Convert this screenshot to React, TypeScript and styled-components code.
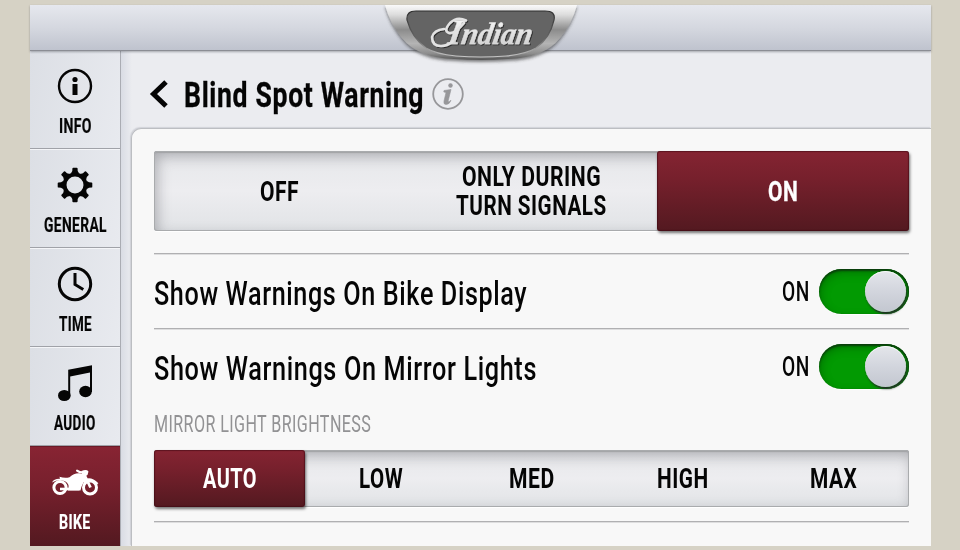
import React, { useLayoutEffect, useRef, useState } from "react";
import styled, { createGlobalStyle, css } from "styled-components";

const GlobalStyle = createGlobalStyle`
  *, *::before, *::after { box-sizing: border-box; }
  html, body { margin: 0; padding: 0; background: #d6d2c5; }
  body { font-family: Roboto, "Liberation Sans", sans-serif; color: #050505; overflow: hidden; }
  button { font: inherit; color: inherit; border: 0; padding: 0; background: none; }
`;

const Page = styled.div`
  width: 960px;
  height: 550px;
  padding: 5px 29px 4px 30px;
  background: #d6d2c5;
`;

const Screen = styled.div`
  position: relative;
  display: flex;
  flex-direction: column;
  height: 541px;
  background: linear-gradient(#ebecf0, #e3e6ec);
`;

const TopBar = styled.header`
  height: 46px;
  flex: none;
  background: linear-gradient(#e6e8ee, #d3d6de 55%, #bfc3ce);
  border-bottom: 1px solid #8b8d94;
  box-shadow: 0 1px 2px rgba(60, 62, 70, 0.4);
  z-index: 1;
`;

const Badge = styled.svg`
  position: absolute;
  left: 350px;
  top: 0;
  z-index: 2;
`;

const Body = styled.div`
  display: flex;
  flex: 1;
  min-height: 0;
`;

const Sidebar = styled.nav`
  width: 90px;
  flex: none;
  display: flex;
  flex-direction: column;
`;

const NavItem = styled.button<{ $active?: boolean }>`
  height: 99px;
  flex: none;
  display: flex;
  flex-direction: column;
  align-items: center;
  padding-top: 18px;
  gap: 11px;
  border-bottom: 1px solid #a0a2a8;
  background: linear-gradient(100deg, #dcdfe5, #e8eaef);
  box-shadow: inset 0 1px 0 #f4f5f8;
  &:first-child { height: 98px; padding-top: 17px; box-shadow: none; }
  ${(p) => p.$active && css`
    height: 100px;
    color: #fff;
    border-bottom: 0;
    box-shadow: inset 0 1px 0 #6b1a27;
    background: linear-gradient(#882433, #77202d 40%, #531920);
  `}
`;

const Main = styled.main`
  flex: 1;
  min-width: 0;
  display: flex;
  flex-direction: column;
  padding-left: 10px;
  border-left: 1px solid #aaacb3;
  background: linear-gradient(90deg, #d9dce4, #ebecf0 11px);
`;

const TitleBar = styled.div`
  height: 77px;
  flex: none;
  display: flex;
  align-items: center;
  padding: 9px 0 0 18px;
`;

const TitleText = styled.div`
  padding-top: 3px;
`;

const Panel = styled.section`
  flex: 1;
  display: flex;
  flex-direction: column;
  padding: 22px 22px 0 22px;
  background: #f8f8f8;
  border: solid #bcbec2;
  border-width: 1px 0 0 1px;
  border-top-left-radius: 10px;
  box-shadow: -1px -1px 1px rgba(150, 153, 162, 0.3);
`;

const Segments = styled.div<{ $height: number }>`
  height: ${(p) => p.$height}px;
  flex: none;
  display: flex;
  border-radius: 3px;
  background: linear-gradient(#e6e7ea, #ededf0 50%, #e1e3e6);
  box-shadow: inset 0 0 0 1px #a9abad, inset 0 2px 1px #a2a3a6, inset 3px 5px 14px rgba(70, 72, 78, 0.38), 0 1px 0 #fff;
`;

const Segment = styled.button<{ $active?: boolean }>`
  flex: 1;
  display: flex;
  flex-direction: column;
  align-items: center;
  justify-content: center;
  ${(p) => p.$active && css`
    color: #fff;
    border-radius: 3px;
    background: linear-gradient(#852432, #76202c 35%, #531920);
    box-shadow: inset 0 0 1px 1px rgba(60, 8, 16, 0.55), 1px 2px 3px rgba(0, 0, 0, 0.55);
  `}
`;

const Divider = styled.hr`
  width: 755px;
  height: 2px;
  margin: 0;
  border: 0;
  flex: none;
  background: linear-gradient(#b0b0b2 50%, #dededf 50%);
`;

const SettingRow = styled.div`
  height: 73px;
  width: 755px;
  flex: none;
  display: flex;
  align-items: center;
  justify-content: space-between;
`;

const RowText = styled.div`
  padding-top: 2px;
`;

const SwitchGroup = styled.div`
  display: flex;
  align-items: center;
  gap: 9px;
`;

const Toggle = styled.button`
  width: 90px;
  height: 45px;
  border-radius: 23px;
  display: flex;
  justify-content: flex-end;
  padding: 2px 3px;
  background: #029a02;
  box-shadow: inset 0 2px 2px #0a3d0c, inset 2px 4px 8px rgba(0, 60, 0, 0.35), inset -1px 0 1px #0b5a0d, 0 1px 0 #fff;
`;

const Knob = styled.span`
  width: 41px;
  height: 41px;
  border-radius: 50%;
  background: linear-gradient(#e4e6eb, #d2d5dd 50%, #c3c7d0);
  box-shadow: inset 0 1px 0 #f5f6f8, 1px 2px 2px #203024;
`;

const SectionLabel = styled.div`
  height: 47px;
  flex: none;
  color: #929294;
  padding-top: 8px;
`;

const Spacer = styled.div<{ $height: number }>`
  height: ${(p) => p.$height}px;
  flex: none;
`;

const FitBox = styled.span<{ $width: number; $size: number; $line: number; $weight: number; $stroke: number }>`
  display: block;
  flex: none;
  width: ${(p) => p.$width}px;
  height: ${(p) => p.$line}px;
  font-size: ${(p) => p.$size}px;
  line-height: ${(p) => p.$line}px;
  font-weight: ${(p) => p.$weight};
  -webkit-text-stroke: ${(p) => p.$stroke}px currentColor;
  text-align: left;
  white-space: nowrap;
`;

const FitInner = styled.span`
  display: inline-block;
  letter-spacing: 0.025em;
  margin-right: -0.025em;
  transform-origin: 0 50%;
`;

type FitProps = { width: number; size: number; line: number; weight?: number; stroke?: number; children: string };

/* Condenses a single line of text horizontally to a given width. */
function Fit({ width, size, line, weight = 700, stroke = 0, children }: FitProps) {
  const ref = useRef<HTMLSpanElement>(null);
  const [scale, setScale] = useState(1);
  useLayoutEffect(() => {
    if (ref.current) setScale(width / ref.current.offsetWidth);
  }, [width, size, weight, children]);
  return (
    <FitBox $width={width} $size={size} $line={line} $weight={weight} $stroke={stroke}>
      <FitInner ref={ref} style={{ transform: `scaleX(${scale})` }}>{children}</FitInner>
    </FitBox>
  );
}

const Icon = styled.svg`
  display: block;
  flex: none;
`;

const BackIcon = styled(Icon)`
  margin-right: 15px;
`;

const HelpIcon = styled(Icon)`
  margin-left: 8px;
`;

const InfoIcon = () => (
  <Icon width="36" height="36" viewBox="0 0 36 36">
    <circle cx="18" cy="18" r="16" fill="none" stroke="currentColor" strokeWidth="2.4" />
    <circle cx="18" cy="11.5" r="2.6" fill="currentColor" />
    <path d="M15.5 16h5v11h-5z" fill="currentColor" />
  </Icon>
);

const GearIcon = () => (
  <Icon width="36" height="36" viewBox="-18 -18 36 36">
    <circle r="10.5" fill="none" stroke="currentColor" strokeWidth="4" />
    {[0, 45, 90, 135, 180, 225, 270, 315].map((a) => (
      <path key={a} transform={`rotate(${a})`} d="M-4.200-11.500L-2.700-14L-2.600-16.500Q-2.500-17.300-1.700-17.300H1.700Q2.500-17.300 2.600-16.500L2.700-14L4.200-11.500z" fill="currentColor" />
    ))}
  </Icon>
);

const ClockIcon = () => (
  <Icon width="36" height="36" viewBox="0 0 36 36">
    <circle cx="18" cy="18" r="15.7" fill="none" stroke="currentColor" strokeWidth="3" />
    <path d="M18 7v11.500l8.300 5" fill="none" stroke="currentColor" strokeWidth="3" />
  </Icon>
);

const NoteIcon = () => (
  <Icon width="36" height="36" viewBox="0 1 36 36">
    <path d="M11.200 5.700L35 1.200V28H33V8.500L13.200 12.500V33h-2z" fill="currentColor" />
    <ellipse cx="7.300" cy="31.500" rx="6.300" ry="5.500" fill="currentColor" />
    <ellipse cx="28.500" cy="27.500" rx="6.300" ry="5.700" fill="currentColor" />
  </Icon>
);

const BikeIcon = () => (
  <Icon width="48" height="36" viewBox="0 0 48 36">
    <g fill="none" stroke="currentColor">
      <circle cx="9" cy="23.500" r="6.100" strokeWidth="3" />
      <circle cx="39" cy="23.500" r="6.500" strokeWidth="3" />
      <path d="M32.500 9L39.500 23.500" strokeWidth="2.800" />
      <path d="M26 6.600Q29 9 34 8.500" strokeWidth="2" strokeLinecap="round" />
      <path d="M32.500 17.500Q39 12.500 46.500 20" strokeWidth="2.400" />
      <path d="M9 25H28" strokeWidth="2.600" />
    </g>
    <path d="M1 18.500Q3 14.500 9 14.800L8.500 12.800Q14 14.500 18.500 13.200Q23 9 28 9.200L31 9.800L30.500 7Q35.500 5 37.500 7.500L36.500 11L34 12.500L35 16Q31 19 29.500 26.500H17Q19 19.500 14 17.300Q8 14.500 1 18.500z" fill="currentColor" />
  </Icon>
);

const nav = [
  { label: "INFO", width: 33, icon: <InfoIcon /> },
  { label: "GENERAL", width: 63, icon: <GearIcon /> },
  { label: "TIME", width: 33, icon: <ClockIcon /> },
  { label: "AUDIO", width: 42, icon: <NoteIcon /> },
  { label: "BIKE", width: 32, icon: <BikeIcon />, active: true },
];

const levels = [
  { label: "AUTO", width: 54, active: true },
  { label: "LOW", width: 44 },
  { label: "MED", width: 46 },
  { label: "HIGH", width: 52 },
  { label: "MAX", width: 47 },
];

const settings = [
  { label: "Show Warnings On Bike Display", width: 373 },
  { label: "Show Warnings On Mirror Lights", width: 383 },
];

const Logo = () => (
  <Badge width="202" height="62" viewBox="380 5 202 62">
    <defs>
      <linearGradient id="chrome" x1="0" y1="0" x2="0" y2="1">
        <stop offset="0" stopColor="#fafafa" />
        <stop offset=".18" stopColor="#dcdcdc" />
        <stop offset=".45" stopColor="#8c8c8c" />
        <stop offset=".7" stopColor="#b4b4b4" />
        <stop offset=".88" stopColor="#8e8e8e" />
        <stop offset="1" stopColor="#545454" />
      </linearGradient>
      <linearGradient id="rim" x1="0" y1="0" x2="0" y2="1">
        <stop offset="0" stopColor="#2e2e2e" />
        <stop offset=".6" stopColor="#666" />
        <stop offset="1" stopColor="#c8c8c8" />
      </linearGradient>
      <linearGradient id="script" x1="0" y1="0" x2="0" y2="1">
        <stop offset="0" stopColor="#fff" />
        <stop offset="1" stopColor="#c8c8c8" />
      </linearGradient>
      <filter id="drop" x="-10%" y="-10%" width="120%" height="130%">
        <feDropShadow dx="0" dy="2" stdDeviation="1.500" floodColor="#333" floodOpacity=".6" />
      </filter>
      <filter id="engrave" x="-10%" y="-10%" width="120%" height="130%">
        <feDropShadow dx="1" dy="1" stdDeviation=".5" floodColor="#222" floodOpacity=".8" />
      </filter>
    </defs>
    <path d="M385 5H577Q572 24 560 38Q544 58 508 59Q481 61 454 59Q418 58 402 38Q390 24 385 5z" fill="url(#chrome)" filter="url(#drop)" />
    <path d="M416 11H545Q556 11 554 20Q550 38 536 48Q526 54 506 56Q481 58 456 56Q436 54 426 48Q412 38 407 20Q406 11 416 11z" fill="#646464" stroke="url(#rim)" strokeWidth="1.200" />
    <g filter="url(#engrave)">
      <g transform="translate(0 44) skewX(-10)">
        <text x="447" y="0" textLength="84" lengthAdjust="spacingAndGlyphs" fontFamily="'Liberation Serif', serif" fontSize="31" fontStyle="italic" fontWeight="700" fill="url(#script)" stroke="#e0e0e0" strokeWidth=".4">
          <tspan fontSize="36">I</tspan>ndian
        </text>
      </g>
      <path d="M466 20.500Q457 16 450 23Q443 31 449 33Q455 34 464 23M444 29Q434 30 432 37Q432 46 441 46Q448 46 453 41" fill="none" stroke="#e2e2e2" strokeWidth="2.600" strokeLinecap="round" />
    </g>
  </Badge>
);

export default function App() {
  return (
    <>
      <GlobalStyle />
      <Page>
        <Screen>
          <TopBar />
          <Logo />
          <Body>
            <Sidebar>
              {nav.map((n) => (
                <NavItem key={n.label} $active={n.active}>
                  {n.icon}
                  <Fit width={n.width} size={20} line={22} stroke={0.2}>{n.label}</Fit>
                </NavItem>
              ))}
            </Sidebar>
            <Main>
              <TitleBar>
                <BackIcon width="20" height="28" viewBox="0 0 20 28">
                  <path d="M17 2L4.500 14L17 26" fill="none" stroke="currentColor" strokeWidth="5" />
                </BackIcon>
                <TitleText>
                  <Fit width={240} size={35} line={40} stroke={0.3}>Blind Spot Warning</Fit>
                </TitleText>
                <HelpIcon width="32" height="32" viewBox="0 0 32 32">
                  <circle cx="16" cy="16" r="14.800" fill="none" stroke="#97979a" strokeWidth="1.800" />
                  <circle cx="18.500" cy="7.500" r="2.200" fill="#97979a" />
                  <path d="M12 12.500L19 11.500L16 23.500Q16.800 24.500 19 22.200Q17.500 26.500 14 26.500Q11.300 26.500 12 23L14 14.500L11.800 14z" fill="#97979a" stroke="#97979a" strokeWidth=".6" />
                </HelpIcon>
              </TitleBar>
              <Panel>
                <Segments $height={80}>
                  <Segment><Fit width={39} size={28} line={29}>OFF</Fit></Segment>
                  <Segment>
                    <Fit width={139} size={28} line={29}>ONLY DURING</Fit>
                    <Fit width={151} size={28} line={29}>TURN SIGNALS</Fit>
                  </Segment>
                  <Segment $active><Fit width={30} size={28} line={29} stroke={0.3}>ON</Fit></Segment>
                </Segments>
                <Spacer $height={22} />
                {settings.map((s) => (
                  <React.Fragment key={s.label}>
                    <Divider />
                    <SettingRow>
                      <RowText>
                        <Fit width={s.width} size={34} line={40} weight={500}>{s.label}</Fit>
                      </RowText>
                      <SwitchGroup>
                        <Fit width={28} size={28} line={30} weight={500}>ON</Fit>
                        <Toggle><Knob /></Toggle>
                      </SwitchGroup>
                    </SettingRow>
                  </React.Fragment>
                ))}
                <SectionLabel><Fit width={217} size={24} line={26} weight={400}>MIRROR LIGHT BRIGHTNESS</Fit></SectionLabel>
                <Segments $height={57}>
                  {levels.map((l) => (
                    <Segment key={l.label} $active={l.active}>
                      <Fit width={l.width} size={28} line={32}>{l.label}</Fit>
                    </Segment>
                  ))}
                </Segments>
                <Spacer $height={14} />
                <Divider />
              </Panel>
            </Main>
          </Body>
        </Screen>
      </Page>
    </>
  );
}
